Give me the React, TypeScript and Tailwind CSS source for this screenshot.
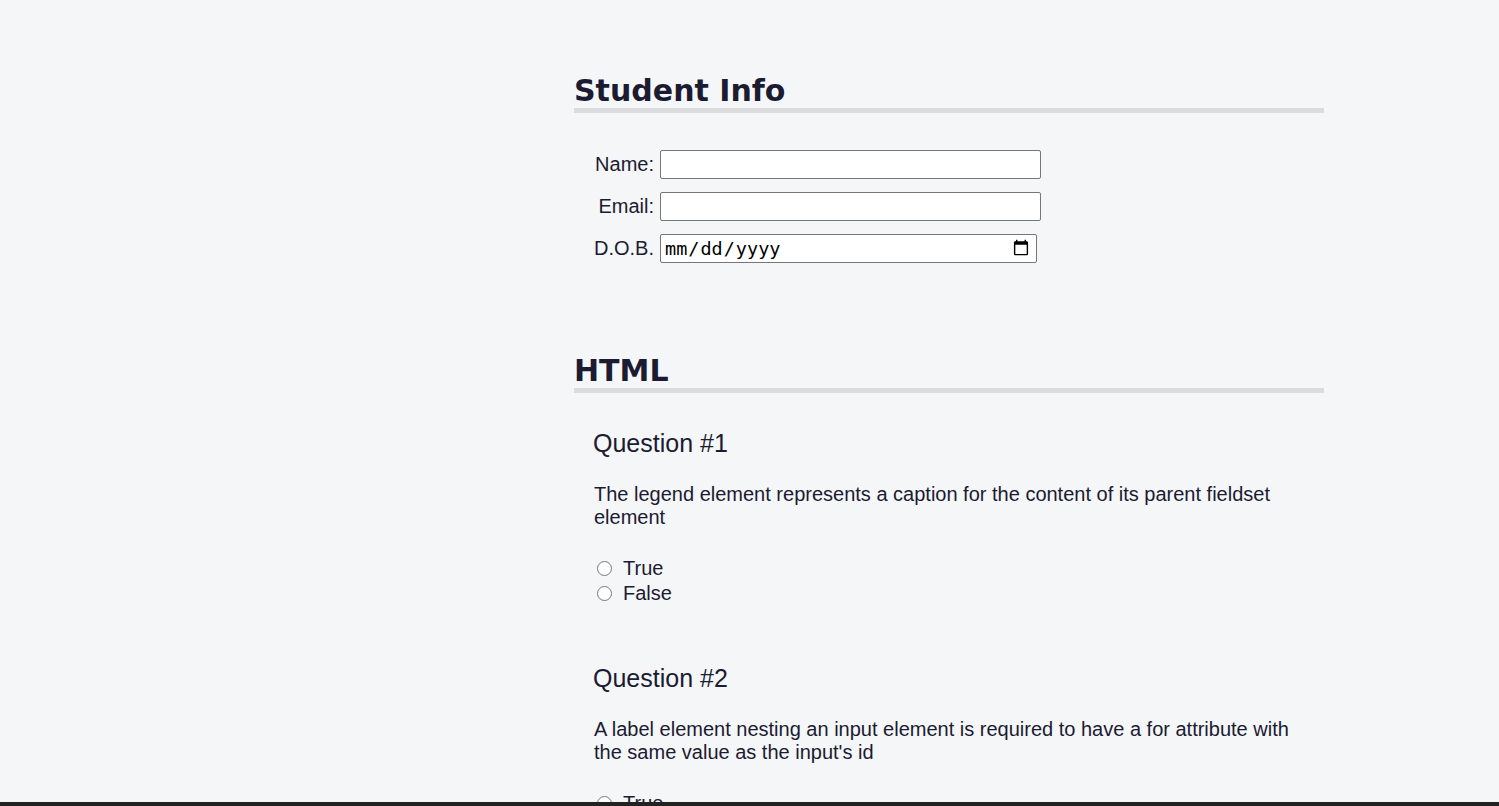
const questions = [
  {
    title: "Question #1",
    text: "The legend element represents a caption for the content of its parent fieldset element",
  },
  {
    title: "Question #2",
    text: "A label element nesting an input element is required to have a for attribute with the same value as the input's id",
  },
];

const SectionHeading = ({ children }: { children: React.ReactNode }) => (
  <h2 className="font-['DejaVu_Sans',sans-serif] text-[30px] font-bold leading-[30px] pb-[2px] border-b-[5px] border-[#dcdcdf]">
    {children}
  </h2>
);

const App = () => {
  return (
    <div className="min-h-screen bg-[#f5f6f7] text-[#1b1b32] font-['Liberation_Sans',Arial,sans-serif] text-[20px]">
      <form className="ml-[574px] w-[750px] pt-[76px]">
        {/* Student info */}
        <section>
          <SectionHeading>Student Info</SectionHeading>
          <div className="mt-[37px] pl-[20px] grid grid-cols-[auto_auto] justify-start items-center gap-x-[6px] gap-y-[13px]">
            <label htmlFor="name" className="text-right leading-[23px]">
              Name:
            </label>
            <input
              id="name"
              type="text"
              className="w-[381px] h-[29px] bg-white border border-[#767676] rounded-[2px] px-[2px]"
            />
            <label htmlFor="email" className="text-right leading-[23px]">
              Email:
            </label>
            <input
              id="email"
              type="email"
              className="w-[381px] h-[29px] bg-white border border-[#767676] rounded-[2px] px-[2px]"
            />
            <label htmlFor="dob" className="text-right leading-[23px]">
              D.O.B.
            </label>
            <input
              id="dob"
              type="date"
              className="w-[377px] h-[29px] bg-white border border-[#767676] rounded-[2px] pl-[3px] pr-[4px] font-['DejaVu_Sans_Mono',monospace] text-[18.5px] text-black"
            />
          </div>
        </section>

        {/* HTML questions */}
        <section className="mt-[93px]">
          <SectionHeading>HTML</SectionHeading>
          <div className="pl-[20px] pr-[20px]">
            {questions.map((q, i) => (
              <div key={q.title} className={i === 0 ? "mt-[36px]" : "mt-[58px]"}>
                <h3 className="text-[25px] leading-[29px] -ml-[1px]">{q.title}</h3>
                <p className="mt-[25px] leading-[23px]">{q.text}</p>
                <div className="mt-[27px] flex flex-col">
                  {["True", "False"].map((opt) => (
                    <label key={opt} className="flex items-center h-[25px]">
                      <input
                        type="radio"
                        name={`q${i + 1}`}
                        className="ml-[3px] w-[15px] h-[15px]"
                      />
                      <span className="ml-[11px] leading-[23px]">{opt}</span>
                    </label>
                  ))}
                </div>
              </div>
            ))}
          </div>
        </section>
      </form>

      {/* dark strip along the bottom edge */}
      <div className="fixed bottom-0 left-0 right-0 h-[4px] bg-[#222222]" />
    </div>
  );
};

export default App;
